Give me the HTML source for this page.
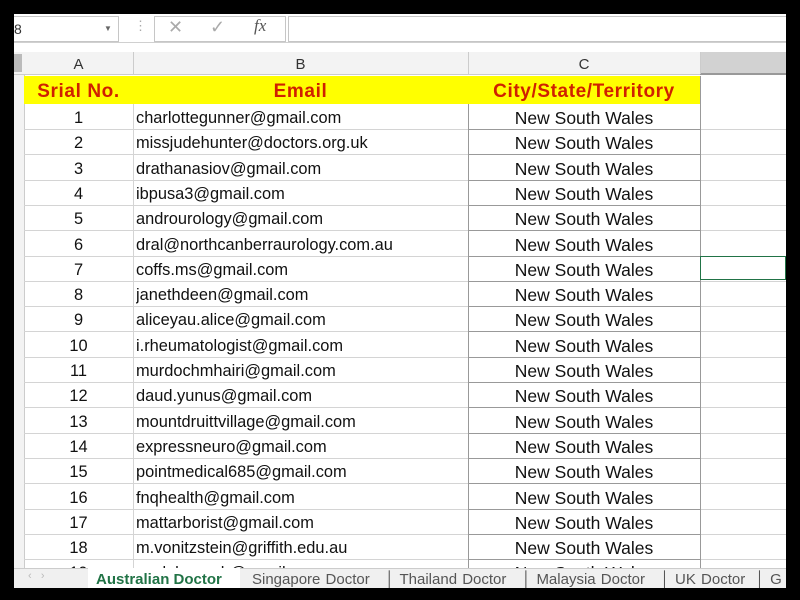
<!DOCTYPE html>
<html><head><style>
body{margin:0;background:#000;width:800px;height:600px;overflow:hidden;position:relative;font-family:"Liberation Sans",sans-serif}
.p{position:absolute}
#app{left:14px;top:14px;width:772px;height:574px;background:#fff;overflow:hidden}
.cell{position:absolute;font-size:16.4px;color:#111;line-height:25px;white-space:nowrap;overflow:hidden}
.hl{position:absolute;height:1px;background:#d4d4d4}
.vl{position:absolute;width:1px;background:#d4d4d4}
.hd{color:#d02000;font-weight:bold;font-size:19px;letter-spacing:0.6px}
</style></head><body>
<div id="app" class="p">
 <div class="p" style="left:0;top:0;width:772px;height:28px;background:#fff;border-bottom:1px solid #d0d0d0"></div>
 <div class="p" style="left:0;top:2px;width:104px;height:24px;border:1px solid #c6c6c6;border-left:none;font-size:14px;line-height:24px;color:#333">8<span style="position:absolute;left:90px;font-size:8px;color:#666">▼</span></div>
 <div class="p" style="left:120px;top:4px;color:#aaa;font-size:13px">⋮</div>
 <div class="p" style="left:140px;top:2px;width:130px;height:24px;border:1px solid #c6c6c6"></div>
 <div class="p" style="left:154px;top:3px;color:#aaa;font-size:18px">✕</div>
 <div class="p" style="left:196px;top:3px;color:#aaa;font-size:18px">✓</div>
 <div class="p" style="left:240px;top:2px;color:#555;font-size:17px;font-style:italic;font-family:'Liberation Serif',serif">fx</div>
 <div class="p" style="left:274px;top:2px;width:500px;height:24px;border:1px solid #c6c6c6"></div>
 <div class="p" style="left:0;top:38px;width:772px;height:22px;background:#f3f3f3;border-bottom:1px solid #ccc"></div>
 <div class="p" style="left:0;top:40px;width:8px;height:18px;background:#bbb"></div>
 <div class="p" style="left:686px;top:38px;width:86px;height:21px;background:#d2d2d2;border-bottom:2px solid #999"></div>
 <div class="cell" style="left:10px;top:38px;width:109px;text-align:center;color:#333;font-size:15px">A</div>
 <div class="cell" style="left:119px;top:38px;width:335px;text-align:center;color:#333;font-size:15px">B</div>
 <div class="cell" style="left:454px;top:38px;width:232px;text-align:center;color:#333;font-size:15px">C</div>
 <div class="vl" style="left:119px;top:38px;height:22px;background:#ccc"></div>
 <div class="vl" style="left:454px;top:38px;height:22px;background:#ccc"></div>
 <div class="vl" style="left:686px;top:38px;height:22px;background:#ccc"></div>
 <div class="p" style="left:0;top:61px;width:10px;height:493px;background:#f3f3f3;border-right:1px solid #ccc"></div>
 <div class="p" style="left:10px;top:62px;width:676px;height:28px;background:#ffff00"></div>
 <div class="cell hd" style="left:10px;top:65px;width:109px;text-align:center">Srial No.</div>
 <div class="cell hd" style="left:119px;top:65px;width:335px;text-align:center">Email</div>
 <div class="cell hd" style="left:454px;top:65px;width:232px;text-align:center">City/State/Territory</div>
 <div id="rows"></div>
 <div class="p" style="left:0;top:554px;width:772px;height:20px;background:#f0f0f0;border-top:1px solid #ccc"></div>
 <div class="p" style="left:14px;top:556px;color:#bbb;font-size:11px">‹ &nbsp; ›</div>
 <div class="p" style="left:74px;top:554px;width:152px;height:20px;background:#fff"></div>
 <div class="p" style="left:82px;top:557px;font-size:15px;color:#217346;font-weight:bold">Australian Doctor</div>
 <div class="p" style="left:238px;top:557px;font-size:15px;color:#555;white-space:nowrap;word-spacing:1px">Singapore Doctor &nbsp;&nbsp;│ Thailand Doctor &nbsp;&nbsp;│ Malaysia Doctor &nbsp;&nbsp;│ UK Doctor &nbsp;│ G</div>
</div>
<script>
var e=["charlottegunner@gmail.com","missjudehunter@doctors.org.uk","drathanasiov@gmail.com","ibpusa3@gmail.com","androurology@gmail.com","dral@northcanberraurology.com.au","coffs.ms@gmail.com","janethdeen@gmail.com","aliceyau.alice@gmail.com","i.rheumatologist@gmail.com","murdochmhairi@gmail.com","daud.yunus@gmail.com","mountdruittvillage@gmail.com","expressneuro@gmail.com","pointmedical685@gmail.com","fnqhealth@gmail.com","mattarborist@gmail.com","m.vonitzstein@griffith.edu.au","wadehuongh@gmail.com"];
var h="";
for(var i=0;i<19;i++){var t=90+i*25.3,ty=t+2;
h+='<div class="hl" style="left:10px;top:'+(t+25).toFixed(1)+'px;width:762px"></div>';
h+='<div class="cell" style="left:10px;top:'+ty.toFixed(1)+'px;width:109px;text-align:center">'+(i+1)+'</div>';
h+='<div class="cell" style="left:122px;top:'+ty.toFixed(1)+'px;width:330px">'+e[i]+'</div>';
h+='<div class="cell" style="left:454px;top:'+ty.toFixed(1)+'px;width:232px;text-align:center;font-size:17.5px">New South Wales</div>';
h+='<div class="hl" style="left:454px;top:'+(t+25).toFixed(1)+'px;width:232px;background:#999"></div>';}
h+='<div class="vl" style="left:119px;top:90px;height:464px"></div><div class="vl" style="left:454px;top:90px;height:464px;background:#999"></div><div class="vl" style="left:686px;top:62px;height:492px;background:#999"></div>';
h+='<div class="p" style="left:686px;top:242px;width:86px;height:24px;border:1px solid #217346;box-sizing:border-box"></div>';
document.getElementById("rows").innerHTML=h;
</script>
</body></html>
